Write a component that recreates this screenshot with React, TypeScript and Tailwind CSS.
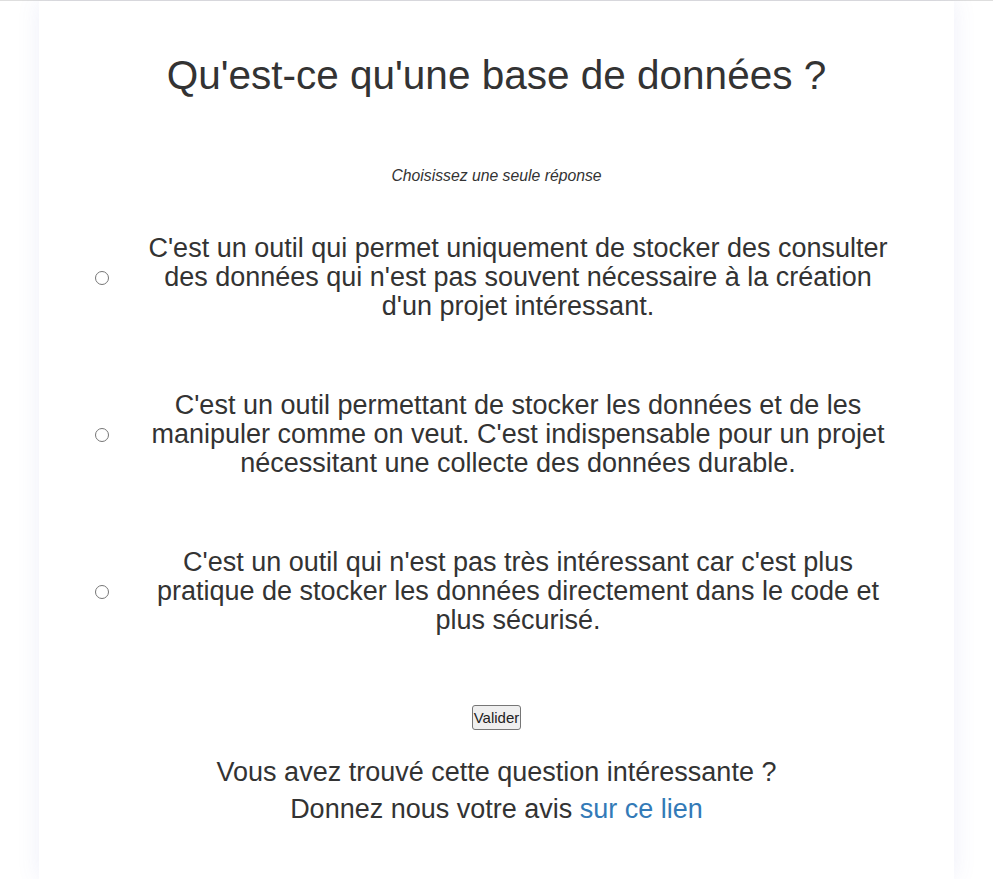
import React from "react";

const options = [
  "C'est un outil qui permet uniquement de stocker des consulter des données qui n'est pas souvent nécessaire à la création d'un projet intéressant.",
  "C'est un outil permettant de stocker les données et de les manipuler comme on veut. C'est indispensable pour un projet nécessitant une collecte des données durable.",
  "C'est un outil qui n'est pas très intéressant car c'est plus pratique de stocker les données directement dans le code et plus sécurisé.",
];

export default function App() {
  return (
    <div
      className="min-h-[879px] bg-white border-t border-[#dedede] text-[#333333]"
      style={{ fontFamily: '"Liberation Sans", Arial, sans-serif' }}
    >
      <div className="ml-[39px] w-[915px] min-h-[878px] bg-white shadow-[0_0_22px_rgba(90,100,200,0.10)] flex flex-col items-center">
        <h1 className="mt-[52px] text-[40.5px] leading-[44px] text-center">
          Qu'est-ce qu'une base de données ?
        </h1>
        <p className="mt-[69px] text-[15.75px] leading-[20px] italic text-center">
          Choisissez une seule réponse
        </p>
        <div className="mt-[48px] flex flex-col gap-[70px] self-stretch">
          {options.map((o, i) => (
            <label key={i} className="flex items-center">
              <input
                type="radio"
                name="q"
                className="ml-[56px] w-[14px] h-[14px] m-0 shrink-0"
              />
              <span className="ml-[31px] w-[756px] text-[27px] leading-[29px] text-center">
                {o}
              </span>
            </label>
          ))}
        </div>
        <button className="mt-[70px] h-[25px] px-[1px] text-[15px] leading-[17px] bg-[#efefef] border border-[#767676] rounded-[3px] text-[#222]">
          Valider
        </button>
        <p className="mt-[24px] text-[27px] leading-[37px] text-center">
          Vous avez trouvé cette question intéressante ?
          <br />
          Donnez nous votre avis{" "}
          <a href="#" className="text-[#337ab7]">
            sur ce lien
          </a>
        </p>
      </div>
    </div>
  );
}
